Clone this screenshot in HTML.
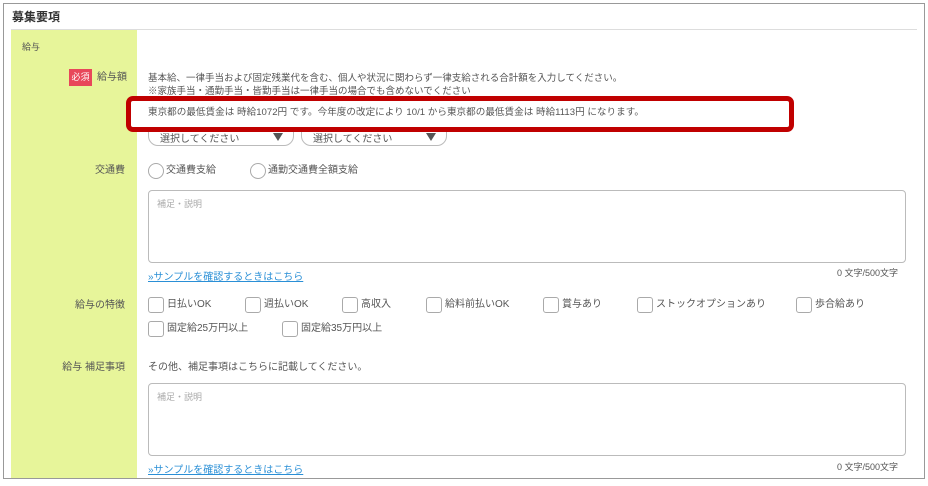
<!DOCTYPE html>
<html><head><meta charset="utf-8"><style>
*{margin:0;padding:0;box-sizing:border-box}
body{width:928px;height:486px;background:#fff;position:relative;overflow:hidden;font-family:"Liberation Sans","Noto Sans CJK JP",sans-serif;font-size:10px;color:#555}
.a{position:absolute;white-space:nowrap;line-height:12px}
.box{position:absolute;border:1px solid #aaa}
.lbl{position:absolute;right:803px;white-space:nowrap;line-height:12px;color:#555}
.cb{position:absolute;width:16px;height:16px;border:1px solid #aaa;border-radius:3px;background:#fff}
.rd{position:absolute;width:16px;height:16px;border:1px solid #aaa;border-radius:50%;background:#fff}
.ta{position:absolute;left:148px;width:758px;height:73px;border:1px solid #bbb;border-radius:4px;background:#fff}
.ph{position:absolute;left:8px;top:6px;color:#aaa;font-size:9px}
.lnk{position:absolute;color:#2a8fd6;text-decoration:underline;white-space:nowrap;font-size:10px}
.cnt{position:absolute;right:30px;font-size:9px;color:#555;white-space:nowrap}
.sel{position:absolute;top:122px;height:24px;border:1px solid #bbb;border-radius:10px;background:#fff;width:146px}
.sel span{position:absolute;left:11px;top:7px;font-size:10px;color:#555}
.sel i{position:absolute;right:10px;top:10px;width:0;height:0;border-left:5px solid transparent;border-right:5px solid transparent;border-top:8px solid #555}
</style></head><body>
<div class="box" style="left:3px;top:3px;width:922px;height:476px;border-color:#999"></div>
<div class="a" style="left:12px;top:10px;font-size:12px;font-weight:bold;color:#333;line-height:14px">募集要項</div>
<div style="position:absolute;left:11px;top:29px;width:906px;height:1px;background:#ddd"></div>
<div style="position:absolute;left:11px;top:30px;width:126px;height:448px;background:#e7f59a"></div>

<div class="a" style="left:22px;top:41px;font-size:9px">給与</div>
<div style="position:absolute;left:69px;top:69px;width:23px;height:17px;background:#e8475a;color:#fff;font-size:9px;line-height:17px;text-align:center">必須</div>
<div class="a" style="left:97px;top:72px">給与額</div>
<div class="a" style="left:148px;top:73px;font-size:9.5px">基本給、一律手当および固定残業代を含む、個人や状況に関わらず一律支給される合計額を入力してください。</div>
<div class="a" style="left:148px;top:86px;font-size:9.5px">※家族手当・通勤手当・皆勤手当は一律手当の場合でも含めないでください</div>

<div class="sel" style="left:148px"><span>選択してください</span><i></i></div>
<div class="sel" style="left:301px"><span>選択してください</span><i></i></div>

<div style="position:absolute;left:126px;top:96px;width:668px;height:36px;border:5px solid #c00000;border-radius:7px;background:#fff"></div>
<div class="a" style="left:148px;top:107px;font-size:9.6px">東京都の最低賃金は 時給1072円 です。今年度の改定により 10/1 から東京都の最低賃金は 時給1113円 になります。</div>

<div class="lbl" style="top:165px">交通費</div>
<div class="rd" style="left:148px;top:163px"></div><div class="a" style="left:166px;top:165px">交通費支給</div>
<div class="rd" style="left:250px;top:163px"></div><div class="a" style="left:268px;top:165px">通勤交通費全額支給</div>

<div class="ta" style="top:190px"><div class="ph">補足・説明</div></div>
<div class="lnk" style="left:148px;top:268px">»サンプルを確認するときはこちら</div>
<div class="cnt" style="top:266px">0 文字/500文字</div>

<div class="lbl" style="top:300px">給与の特徴</div>
<div class="cb" style="left:148px;top:297px"></div><div class="a" style="left:167px;top:299px">日払いOK</div>
<div class="cb" style="left:245px;top:297px"></div><div class="a" style="left:264px;top:299px">週払いOK</div>
<div class="cb" style="left:342px;top:297px"></div><div class="a" style="left:361px;top:299px">高収入</div>
<div class="cb" style="left:426px;top:297px"></div><div class="a" style="left:445px;top:299px">給料前払いOK</div>
<div class="cb" style="left:543px;top:297px"></div><div class="a" style="left:562px;top:299px">賞与あり</div>
<div class="cb" style="left:637px;top:297px"></div><div class="a" style="left:656px;top:299px">ストックオプションあり</div>
<div class="cb" style="left:796px;top:297px"></div><div class="a" style="left:815px;top:299px">歩合給あり</div>
<div class="cb" style="left:148px;top:321px"></div><div class="a" style="left:167px;top:323px">固定給25万円以上</div>
<div class="cb" style="left:282px;top:321px"></div><div class="a" style="left:301px;top:323px">固定給35万円以上</div>

<div class="lbl" style="top:362px">給与 補足事項</div>
<div class="a" style="left:148px;top:362px">その他、補足事項はこちらに記載してください。</div>
<div class="ta" style="top:383px"><div class="ph">補足・説明</div></div>
<div class="lnk" style="left:148px;top:461px">»サンプルを確認するときはこちら</div>
<div class="cnt" style="top:460px">0 文字/500文字</div>
</body></html>
